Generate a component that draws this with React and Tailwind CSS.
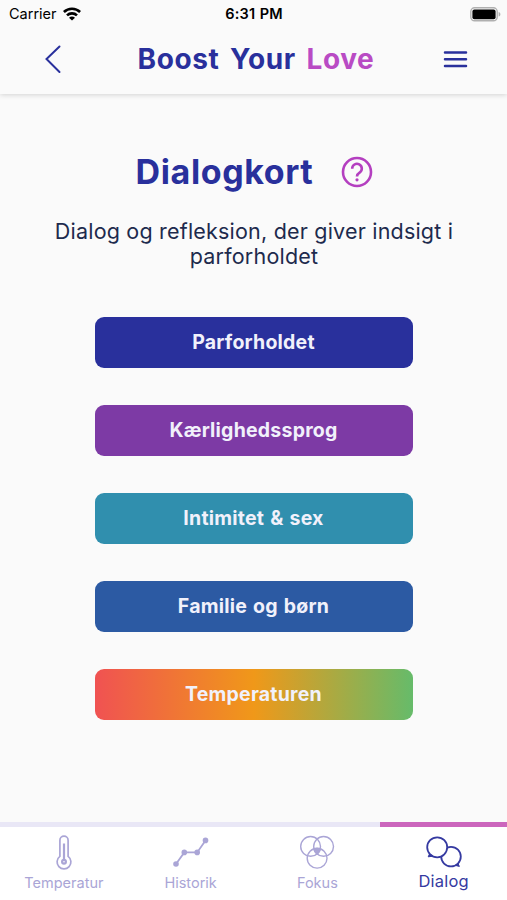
import React, { useState } from 'react';

const cards = [
  { id: 'parforholdet', label: 'Parforholdet', color: 'bg-[#29309c]' },
  { id: 'kaerlighedssprog', label: 'Kærlighedssprog', color: 'bg-[#7d3aa5]' },
  { id: 'intimitet', label: 'Intimitet & sex', color: 'bg-[#308fae]' },
  { id: 'familie', label: 'Familie og børn', color: 'bg-[#2c5aa3]' },
  {
    id: 'temperaturen',
    label: 'Temperaturen',
    color: 'bg-[linear-gradient(90deg,#f05252_0%,#f09819_50%,#66bb6a_100%)]',
  },
];

function WifiIcon() {
  return (
    <svg width="18" height="14" viewBox="0 0 18 14" fill="none" stroke="#000" strokeWidth="2.6">
      <path d="M0.9 5C5.4 0.6 12.6 0.6 17.1 5" />
      <path d="M4 8.4C6.8 5.7 11.2 5.7 14 8.4" />
      <path d="M9 13.6L6 10.7C7.8 9.1 10.2 9.1 12 10.7Z" fill="#000" stroke="none" />
    </svg>
  );
}

function BatteryIcon() {
  return (
    <svg width="31" height="15" viewBox="0 0 31 15" fill="none">
      <rect x="0.8" y="0.8" width="26.4" height="13" rx="3.8" stroke="#b0b0b0" strokeWidth="1.4" />
      <rect x="2.4" y="2.4" width="23.2" height="9.8" rx="2" fill="#000" />
      <path d="M28.6 5C31 5.6 31 9 28.6 9.6Z" fill="#b0b0b0" />
    </svg>
  );
}

function ThermometerIcon() {
  return (
    <svg width="38" height="38" viewBox="0 0 38 38" fill="none" stroke="currentColor" strokeWidth="1.7">
      <path d="M15.9 22.2V6.2a4.1 4.1 0 0 1 8.2 0v16.2a6.9 6.9 0 1 1-8.2 0Z" />
      <path d="M20 9.5v17" strokeWidth="2.2" />
      <circle cx="20" cy="27.8" r="1.9" strokeWidth="2.2" />
    </svg>
  );
}

function HistoryIcon() {
  return (
    <svg width="38" height="38" viewBox="0 0 38 38" fill="currentColor">
      <path d="M5 30L13.3 18.4H26.2L34.5 6.4" fill="none" stroke="currentColor" strokeWidth="1.8" />
      <circle cx="5" cy="30" r="2.8" />
      <circle cx="13.3" cy="18.4" r="2.8" />
      <circle cx="26.2" cy="18.4" r="2.8" />
      <circle cx="34.5" cy="6.4" r="2.8" />
    </svg>
  );
}

function FocusIcon() {
  return (
    <svg width="38" height="38" viewBox="0 0 38 38" fill="none" stroke="currentColor" strokeWidth="1.4">
      <circle cx="12.6" cy="12.4" r="9.9" />
      <circle cx="25.6" cy="12.4" r="9.9" />
      <circle cx="19.1" cy="24.2" r="9.9" />
      <path d="M15.8 15.2Q19.1 13.6 22.4 15.2Q21.8 18.2 19.1 20.2Q16.4 18.2 15.8 15.2Z" fill="currentColor" />
    </svg>
  );
}

function DialogIcon() {
  return (
    <svg width="38" height="38" viewBox="0 0 38 38" fill="#fff" stroke="currentColor" strokeWidth="1.8">
      <circle cx="26" cy="22.6" r="9.8" />
      <path d="M33 29.6L34.4 32.4L30.4 31.4Z" fill="currentColor" strokeWidth="1" strokeLinejoin="round" />
      <circle cx="12.2" cy="13.3" r="10" />
      <path d="M4.6 19.8L3.2 22.8L8 22.2Z" fill="currentColor" strokeWidth="1" strokeLinejoin="round" />
    </svg>
  );
}

const tabs = [
  { id: 'temperatur', label: 'Temperatur', icon: ThermometerIcon },
  { id: 'historik', label: 'Historik', icon: HistoryIcon },
  { id: 'fokus', label: 'Fokus', icon: FocusIcon },
  { id: 'dialog', label: 'Dialog', icon: DialogIcon },
];

function StatusBar() {
  return (
    <div className="grid h-7 grid-cols-3 items-center pl-[9px] pr-[6px] text-black">
      <div className="flex items-center gap-[6px] text-[14.5px]">
        <span>Carrier</span>
        <WifiIcon />
      </div>
      <div className="-ml-[2px] text-center text-[14.5px] font-semibold tracking-[0.2px] [word-spacing:0.5px]">6:31 PM</div>
      <div className="flex justify-end">
        <BatteryIcon />
      </div>
    </div>
  );
}

function Header() {
  return (
    <header className="h-[94px] shrink-0 bg-[#fafafa] shadow-[0_1px_5px_rgba(0,0,0,0.16)]">
      <StatusBar />
      <div className="flex h-[62px] items-center justify-between pl-[44px] pr-[39px]">
        <button aria-label="Tilbage">
          <svg width="18" height="30" viewBox="0 0 18 30" fill="none" stroke="#29309c" strokeWidth="2" strokeLinecap="round">
            <path d="M15.5 2.5L2.5 15L15.5 28" />
          </svg>
        </button>
        <h1 className="ml-[7px] text-[28px] font-bold tracking-[0.6px] text-[#29309c] [word-spacing:3.4px]">
          Boost Your <span className="text-[#b94bc4]">Love</span>
        </h1>
        <button aria-label="Menu">
          <svg width="25" height="18" viewBox="0 0 25 18" stroke="#29309c" strokeWidth="2.5" strokeLinecap="round">
            <path d="M2 2.4H23M2 9.2H23M2 16H23" />
          </svg>
        </button>
      </div>
    </header>
  );
}

export default function App() {
  const [activeTab, setActiveTab] = useState('dialog');

  return (
    <div className="flex h-[900px] w-[507px] flex-col overflow-hidden bg-[#fafafa] font-['Inter',sans-serif] [font-optical-sizing:none]">
      <Header />

      <main className="flex flex-1 flex-col items-center pt-[56px]">
        <div className="flex h-11 items-center gap-[28px] pl-[2px]">
          <h2 className="text-[34px] leading-[44px] font-bold tracking-[0.6px] text-[#29309c]">Dialogkort</h2>
          <svg width="32" height="32" viewBox="0 0 32 32" fill="none" stroke="#b43fc0" strokeWidth="2.6">
            <circle cx="16" cy="16" r="14" />
            <path d="M11.2 12.7A4.8 4.8 0 1 1 18.6 16.6Q16 18.2 16 20.4" />
            <circle cx="16" cy="23.8" r="1.6" fill="#b43fc0" stroke="none" />
          </svg>
        </div>

        <p className="mt-[25px] ml-px w-[420px] text-center text-[21.5px] leading-[25px] tracking-[0.2px] text-[#1d2a4d]">
          Dialog og refleksion, der giver indsigt i parforholdet
        </p>

        <div className="mt-[48px] flex w-[318px] flex-col gap-[37px]">
          {cards.map((card) => (
            <button
              key={card.id}
              className={`h-[51px] rounded-[9px] pt-px text-[19.5px] font-bold tracking-[0.22px] text-[#f1f1fb] [word-spacing:1.2px] ${card.color}`}
            >
              {card.label}
            </button>
          ))}
        </div>
      </main>

      {/* Нижняя навигация */}
      <nav className="grid h-[78px] shrink-0 grid-cols-4 bg-white">
        {tabs.map((tab) => {
          const Icon = tab.icon;
          const active = tab.id === activeTab;
          return (
            <button
              key={tab.id}
              onClick={() => setActiveTab(tab.id)}
              className={`flex flex-col items-center border-t-[5px] pt-[7px] ${
                active ? 'border-[#cc66bd] text-[#353aa1]' : 'border-[#e9e7f6] text-[#aaa5d6]'
              }`}
            >
              <Icon />
              <span className={active ? 'text-[16.5px] leading-[18px] tracking-[0.2px]' : 'pl-px text-[14.5px] leading-[21px]'}>
                {tab.label}
              </span>
            </button>
          );
        })}
      </nav>
    </div>
  );
}
